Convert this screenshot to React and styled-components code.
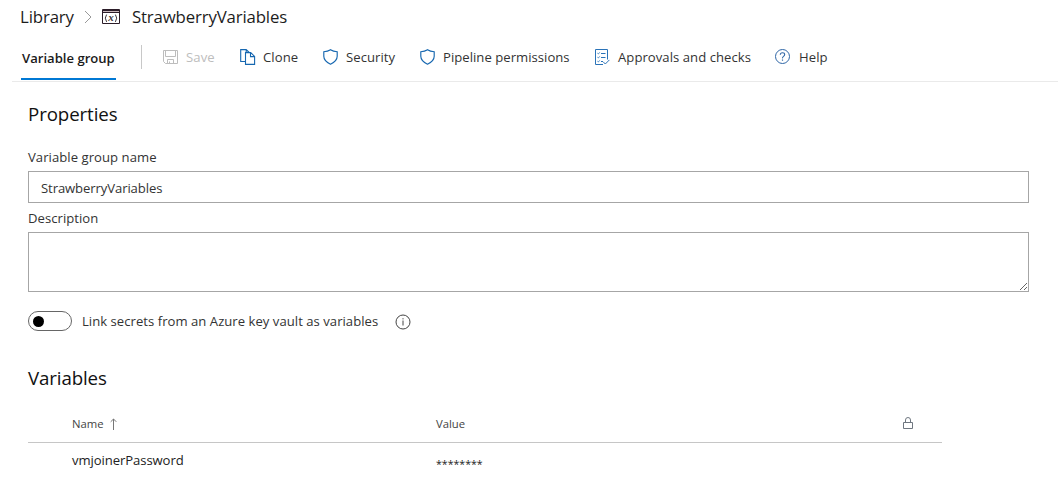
import React from "react";
import styled, { createGlobalStyle } from "styled-components";

const GlobalStyle = createGlobalStyle`
  * { box-sizing: border-box; }
  body {
    margin: 0;
    background: #fff;
    color: #333;
    font-family: "Open Sans", "Noto Sans", sans-serif;
    font-size: 13.1px;
    overflow: hidden;
  }
`;

const Page = styled.main`
  height: 478px;
  overflow: hidden;
`;

const Text = styled.span`
  white-space: nowrap;
  letter-spacing: ${(p) => p.$track || 0}px;
`;

const Breadcrumb = styled.nav`
  display: flex;
  align-items: center;
  height: 33px;
  padding-left: 20px;
  font-size: 16.8px;
  color: #1c1c1c;
  svg { flex: none; }
`;

const Chevron = styled.svg`
  margin: 0 10px 0 10px;
`;

const Title = styled(Text)`
  margin-left: 11px;
`;

const Toolbar = styled.div`
  display: flex;
  height: 49px;
  margin-left: 12px;
  padding-left: 9px;
  border-bottom: 1px solid #eaeaea;
`;

const Tab = styled.div`
  width: 95px;
  height: 47px;
  padding-left: 1px;
  border-bottom: 2px solid #0078d4;
  line-height: 50px;
  font-weight: 600;
  color: #1a1a1a;
`;

const Divider = styled.div`
  width: 1px;
  height: 24px;
  margin: 12px 21px 0 25px;
  background: #c8c8c8;
`;

const Command = styled.button`
  display: flex;
  align-items: center;
  gap: ${(p) => p.$gap || 8}px;
  width: ${(p) => p.$width}px;
  height: 48px;
  padding: 0;
  border: 0;
  background: none;
  font: inherit;
  color: ${(p) => (p.disabled ? "#bdbdbd" : "#333")};
  svg { flex: none; }
`;

const Content = styled.section`
  padding: 16px 29px 0 28px;
`;

const Heading = styled.h2`
  margin: 0;
  font-size: 18.7px;
  font-weight: 400;
  line-height: 32px;
  color: #111;
`;

const Form = styled.div`
  padding-top: 13px;
`;

const Label = styled.label`
  display: block;
  height: ${(p) => p.$height}px;
  line-height: ${(p) => p.$line}px;
`;

const Field = styled.input`
  display: block;
  width: 100%;
  height: 32px;
  padding: 1px 12px 0;
  border: 1px solid #a6a6a6;
  outline: 0;
  font: inherit;
  letter-spacing: -0.1px;
  color: #333;
`;

const Area = styled.textarea`
  display: block;
  width: 100%;
  height: 60px;
  border: 1px solid #a6a6a6;
  outline: 0;
  font: inherit;
  resize: vertical;
`;

const ToggleRow = styled.div`
  display: flex;
  align-items: center;
  height: 20px;
  margin: 19px 0 31px;
`;

const Toggle = styled.button`
  display: flex;
  align-items: center;
  width: 44px;
  height: 20px;
  margin: 0 10px 0 0;
  padding: 0 4px;
  border: 1px solid #666;
  border-radius: 10px;
  background: #fff;
`;

const Knob = styled.span`
  width: 11px;
  height: 11px;
  border-radius: 50%;
  background: #000;
`;

const Info = styled.svg`
  margin: 1px 0 0 17px;
`;

const Table = styled.div`
  width: 914px;
  margin-top: 11px;
`;

const Row = styled.div`
  display: grid;
  grid-template-columns: 364px 466px 1fr;
  align-items: center;
  height: 34px;
  padding-left: 44px;
  color: #222;
`;

const HeaderRow = styled(Row)`
  height: 38px;
  border-bottom: 1px solid #c6c6c6;
  font-size: 11.3px;
  color: #444;
`;

const SortCell = styled.div`
  display: flex;
  align-items: center;
  gap: 6px;
`;

const Mask = styled(Text)`
  padding-top: 7px;
  font-size: 10.6px;
`;

const BLUE = "#1667b0";

const IconLetters = styled.text`
  font: italic 700 11px "Liberation Serif", serif;
`;

const VariableIcon = () => (
  <svg width="19" height="16" viewBox="0 0 19 16" fill="none">
    <path d="M.5 .5H17.5V14.5H.5Z" stroke="#2b1c28" />
    <path d="M1 1.5H17M1 3.5H17" stroke="#2b1c28" />
    <path d="M1 2.5H17" stroke="#c9b8bd" />
    <path d="M4.6 5.6Q2 9 4.6 12.9M13.4 5.6Q16 9 13.4 12.9" stroke="#3b3338" strokeWidth="1" />
    <IconLetters x="6.2" y="11.6" fill="#3b3338">x</IconLetters>
  </svg>
);

const SaveIcon = () => (
  <svg width="15" height="15" viewBox="0 0 15 15" fill="none" stroke="#bdbdbd">
    <path d="M.5 .5H14.5V13.5H2.5L.5 11.5ZM2.5 .5V6.5H12.5V.5M4.5 13.5V9.5H10.5V13.5M6.5 11.5V13.5" />
  </svg>
);

const CloneIcon = () => (
  <svg width="16" height="16" viewBox="0 0 16 16" fill="none" stroke={BLUE} strokeWidth="1.1">
    <path d="M5 12.5H.7V.6H6.2L9.2 3.5M6.2 .6V3.5" />
    <path d="M5.5 3.6H10.7L14.6 7.4V15.4H5.5ZM10.5 3.8V7.6H14.4" />
  </svg>
);

const ShieldIcon = () => (
  <svg width="15" height="16" viewBox="0 0 15 16" fill="none" stroke={BLUE} strokeWidth="1.15">
    <path d="M7.5 .8Q4.8 2.7 .8 2.7V7.2Q.8 12 7.5 15.2Q14.2 12 14.2 7.2V2.7Q10.2 2.7 7.5 .8Z" />
  </svg>
);

const ChecksIcon = () => (
  <svg width="15" height="16" viewBox="0 0 15 16" fill="none" stroke="#2a73b8">
    <path d="M12.5 10.5V.5H.5V15.5H8M6 4.5H10.5M6 8.5H10.5M6 12.5H8M8.2 12.8L10.3 15L14.4 10.9" />
    <path d="M2.4 4.2L3.3 5L4.8 3.3M2.4 8.2L3.3 9L4.8 7.3M2.4 12.2L3.3 13L4.8 11.3" strokeWidth=".8" />
  </svg>
);

const HelpIcon = () => (
  <svg width="16" height="16" viewBox="0 0 16 16" fill="none" stroke="#2f66a6">
    <circle cx="7.5" cy="7.5" r="7" />
    <path d="M5.3 5.7Q5.3 3.7 7.5 3.7T9.7 5.6Q9.7 6.6 8.5 7.4T7.5 9.4" strokeWidth="1.1" />
    <path d="M7.5 10.5V11.7" strokeWidth="1.2" />
  </svg>
);

const commands = [
  { label: "Save", icon: SaveIcon, width: 77, disabled: true, track: 0.1 },
  { label: "Clone", icon: CloneIcon, width: 83, gap: 7, track: 0.1 },
  { label: "Security", icon: ShieldIcon, width: 97, track: 0.05 },
  { label: "Pipeline permissions", icon: ShieldIcon, width: 175, track: 0.03 },
  { label: "Approvals and checks", icon: ChecksIcon, width: 180, track: 0.05 },
  { label: "Help", icon: HelpIcon, width: 60, track: 0.1 },
];

export default function App() {
  return (
    <Page>
      <GlobalStyle />
      <Breadcrumb>
        <Text $track={-0.12}>Library</Text>
        <Chevron width="8" height="14" viewBox="0 0 8 14" fill="none" stroke="#999">
          <path d="M1 1L7 7L1 13" />
        </Chevron>
        <VariableIcon />
        <Title $track={-0.14}>StrawberryVariables</Title>
      </Breadcrumb>
      <Toolbar>
        <Tab><Text>Variable group</Text></Tab>
        <Divider />
        {commands.map(({ label, icon: Icon, width, gap, disabled, track }) => (
          <Command key={label} $width={width} $gap={gap} disabled={disabled}>
            <Icon />
            <Text $track={track}>{label}</Text>
          </Command>
        ))}
      </Toolbar>
      <Content>
        <Heading><Text $track={-0.1}>Properties</Text></Heading>
        <Form>
          <Label $height={28} $line={28}><Text $track={0.05}>Variable group name</Text></Label>
          <Field defaultValue="StrawberryVariables" />
          <Label $height={29} $line={30}><Text $track={0.04}>Description</Text></Label>
          <Area />
        </Form>
        <ToggleRow>
          <Toggle><Knob /></Toggle>
          <Text $track={0.03}>Link secrets from an Azure key vault as variables</Text>
          <Info width="16" height="16" viewBox="0 0 16 16" fill="none" stroke="#444">
            <circle cx="8" cy="8" r="7" />
            <path d="M8 6.5V11.5M8 4.2V5.4" />
          </Info>
        </ToggleRow>
        <Heading><Text $track={-0.12}>Variables</Text></Heading>
        <Table>
          <HeaderRow>
            <SortCell>
              <Text>Name</Text>
              <svg width="8" height="12" viewBox="0 0 8 12" fill="none" stroke="#777">
                <path d="M3.5 12V1M.7 3.8L3.5 1L6.3 3.8" />
              </svg>
            </SortCell>
            <Text>Value</Text>
            <svg width="12" height="13" viewBox="0 0 12 13" fill="none" stroke="#6f7780">
              <path d="M1.5 5.5H10.5V11.5H1.5ZM3.5 5.5V3Q3.5 .5 6 .5T8.5 3V5.5" />
            </svg>
          </HeaderRow>
          <Row>
            <Text $track={-0.08}>vmjoinerPassword</Text>
            <Mask>********</Mask>
          </Row>
        </Table>
      </Content>
    </Page>
  );
}
